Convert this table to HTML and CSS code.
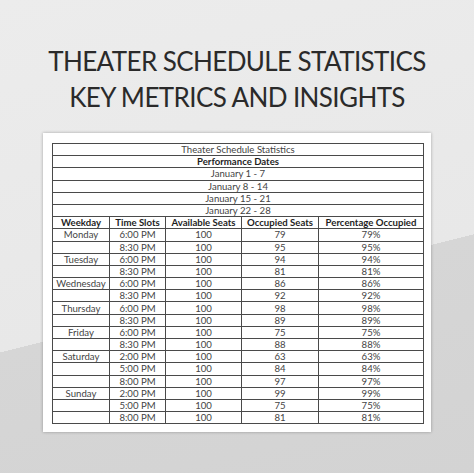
FILE: index.html
```html
<!DOCTYPE html>
<html>
<head>
<meta charset="utf-8">
<link rel="stylesheet" href="styles.css">
</head>
<body>
<div class="page">
  <h1 class="title">THEATER SCHEDULE STATISTICS<br>KEY METRICS AND INSIGHTS</h1>
  <div class="paper">
    <table class="sheet">
      <colgroup>
        <col class="c1"><col class="c2"><col class="c3"><col class="c4"><col class="c5">
      </colgroup>
      <tr><td colspan="5">Theater Schedule Statistics</td></tr>
      <tr><td colspan="5" class="b">Performance Dates</td></tr>
      <tr><td colspan="5">January 1 - 7</td></tr>
      <tr><td colspan="5">January 8 - 14</td></tr>
      <tr><td colspan="5">January 15 - 21</td></tr>
      <tr><td colspan="5">January 22 - 28</td></tr>
      <tr class="head"><td>Weekday</td><td>Time Slots</td><td>Available Seats</td><td>Occupied Seats</td><td>Percentage Occupied</td></tr>
      <tr><td>Monday</td><td>6:00 PM</td><td>100</td><td>79</td><td>79%</td></tr>
      <tr><td></td><td>8:30 PM</td><td>100</td><td>95</td><td>95%</td></tr>
      <tr><td>Tuesday</td><td>6:00 PM</td><td>100</td><td>94</td><td>94%</td></tr>
      <tr><td></td><td>8:30 PM</td><td>100</td><td>81</td><td>81%</td></tr>
      <tr><td>Wednesday</td><td>6:00 PM</td><td>100</td><td>86</td><td>86%</td></tr>
      <tr><td></td><td>8:30 PM</td><td>100</td><td>92</td><td>92%</td></tr>
      <tr><td>Thursday</td><td>6:00 PM</td><td>100</td><td>98</td><td>98%</td></tr>
      <tr><td></td><td>8:30 PM</td><td>100</td><td>89</td><td>89%</td></tr>
      <tr><td>Friday</td><td>6:00 PM</td><td>100</td><td>75</td><td>75%</td></tr>
      <tr><td></td><td>8:30 PM</td><td>100</td><td>88</td><td>88%</td></tr>
      <tr><td>Saturday</td><td>2:00 PM</td><td>100</td><td>63</td><td>63%</td></tr>
      <tr><td></td><td>5:00 PM</td><td>100</td><td>84</td><td>84%</td></tr>
      <tr><td></td><td>8:00 PM</td><td>100</td><td>97</td><td>97%</td></tr>
      <tr><td>Sunday</td><td>2:00 PM</td><td>100</td><td>99</td><td>99%</td></tr>
      <tr><td></td><td>5:00 PM</td><td>100</td><td>75</td><td>75%</td></tr>
      <tr><td></td><td>8:00 PM</td><td>100</td><td>81</td><td>81%</td></tr>
    </table>
  </div>
</div>
</body>
</html>
```

FILE: styles.css
```css
html, body {
  margin: 0;
  padding: 0;
}
body {
  width: 474px;
  height: 473px;
  overflow: hidden;
  background: linear-gradient(166deg, #ececec 0, #e8e8e8 342px, #d6d6d6 342px, #d3d3d3 100%);
  font-family: "Lato", "Noto Sans", sans-serif;
}
.page {
  padding-top: 43px;
}
.title {
  margin: 0;
  font-family: "Lato", sans-serif;
  font-weight: 400;
  font-size: 26px;
  letter-spacing: -0.6px;
  line-height: 36px;
  text-align: center;
  color: #2a2a2a;
}
.paper {
  width: 370px;
  margin: 18px auto 0;
  padding: 10px 9px 8px;
  background: #fff;
  box-shadow: 0 0 3px rgba(0, 0, 0, 0.3);
}
.sheet {
  width: 371px;
  border-collapse: collapse;
  table-layout: fixed;
  font-size: 9.6px;
  color: #444;
}
.c1 { width: 57px; }
.c2 { width: 56px; }
.c3 { width: 76px; }
.c4 { width: 77px; }
.c5 { width: 105px; }
.sheet td {
  border: 1px solid #4a4a4a;
  padding: 0;
  height: 11.2px;
  line-height: 11px;
  text-align: center;
  white-space: nowrap;
}
.sheet .b,
.sheet .head td {
  font-weight: 700;
  color: #1e1e1e;
}
```
